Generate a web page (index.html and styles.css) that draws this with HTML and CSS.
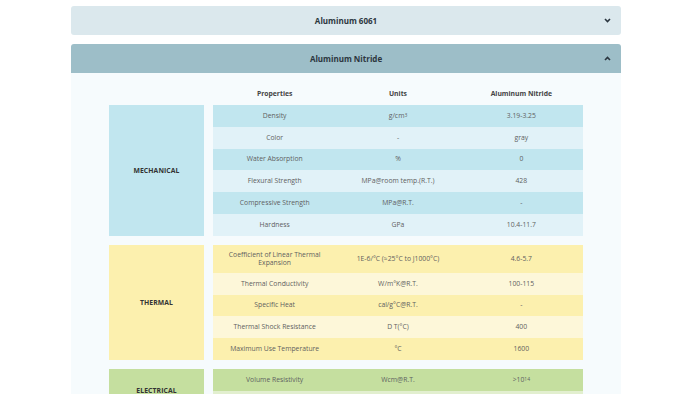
FILE: index.html
```html
<!DOCTYPE html>
<html>
<head>
<meta charset="utf-8">
<link rel="stylesheet" href="styles.css">
</head>
<body>
<div class="wrap">
  <div class="acc">
    <div class="acc-head closed">
      <span class="sp"></span>
      <span class="title">Aluminum 6061</span>
      <span class="chev"><svg width="7" height="5" viewBox="0 0 7 5"><polyline points="1,1 3.5,3.5 6,1" fill="none" stroke="#2b3640" stroke-width="1.6"/></svg></span>
    </div>
  </div>
  <div class="acc">
    <div class="acc-head open">
      <span class="sp"></span>
      <span class="title">Aluminum Nitride</span>
      <span class="chev"><svg width="7" height="5" viewBox="0 0 7 5"><polyline points="1,4 3.5,1.5 6,4" fill="none" stroke="#2b3640" stroke-width="1.6"/></svg></span>
    </div>
    <div class="acc-body">
      <div class="thead">
        <div></div>
        <div class="hrow">
          <div>Properties</div><div>Units</div><div>Aluminum Nitride</div>
        </div>
      </div>

      <div class="group mech">
        <div class="cat">MECHANICAL</div>
        <div class="rows">
          <div class="row"><div>Density</div><div>g/cm<sup>3</sup></div><div>3.19-3.25</div></div>
          <div class="row"><div>Color</div><div>-</div><div>gray</div></div>
          <div class="row"><div>Water Absorption</div><div>%</div><div>0</div></div>
          <div class="row"><div>Flexural Strength</div><div>MPa@room temp.(R.T.)</div><div>428</div></div>
          <div class="row"><div>Compressive Strength</div><div>MPa@R.T.</div><div>-</div></div>
          <div class="row"><div>Hardness</div><div>GPa</div><div>10.4-11.7</div></div>
        </div>
      </div>

      <div class="group therm">
        <div class="cat">THERMAL</div>
        <div class="rows">
          <div class="row two"><div>Coefficient of Linear Thermal Expansion</div><div>1E-6/°C (≈25°C to J1000°C)</div><div>4.6-5.7</div></div>
          <div class="row"><div>Thermal Conductivity</div><div>W/m°K@R.T.</div><div>100-115</div></div>
          <div class="row"><div>Specific Heat</div><div>cal/g°C@R.T.</div><div>-</div></div>
          <div class="row"><div>Thermal Shock Resistance</div><div>D T(°C)</div><div>400</div></div>
          <div class="row"><div>Maximum Use Temperature</div><div>°C</div><div>1600</div></div>
        </div>
      </div>

      <div class="group elec">
        <div class="cat">ELECTRICAL</div>
        <div class="rows">
          <div class="row"><div>Volume Resistivity</div><div>Wcm@R.T.</div><div>&gt;10<sup>14</sup></div></div>
          <div class="row"><div>Dielectric Strength</div><div>kV/mm</div><div>15</div></div>
        </div>
      </div>
    </div>
  </div>
</div>
</body>
</html>
```

FILE: styles.css
```css
html, body {
  margin: 0;
  padding: 0;
  background: #ffffff;
  font-family: "Open Sans", "Noto Sans", sans-serif;
  color: #555;
}
.wrap {
  width: 550px;
  margin-left: 71px;
  padding-top: 6px;
}
.acc {
  margin-bottom: 9px;
}
.acc-head {
  height: 29px;
  display: grid;
  grid-template-columns: 28px 1fr 28px;
  align-items: center;
  border-radius: 3px;
  color: #2c363e;
  font-weight: 700;
  font-size: 8px;
}
.acc-head.closed {
  background: #dbe8ed;
}
.acc-head.open {
  background: #9dbec8;
  border-radius: 3px 3px 0 0;
}
.title {
  text-align: center;
}
.chev {
  display: flex;
  justify-content: center;
  align-items: center;
}
.acc-body {
  background: #f6fbfd;
  padding: 9px 38px 20px 38px;
}
.thead {
  display: grid;
  grid-template-columns: 95px 1fr;
  column-gap: 9px;
  height: 23px;
}
.hrow {
  display: grid;
  grid-template-columns: 1fr 1fr 1fr;
  align-items: center;
  text-align: center;
  font-size: 6.8px;
  font-weight: 700;
  color: #444;
}
.group {
  display: grid;
  grid-template-columns: 95px 1fr;
  column-gap: 9px;
  margin-bottom: 9px;
}
.cat {
  display: flex;
  align-items: center;
  justify-content: center;
  font-size: 6.8px;
  font-weight: 700;
  color: #333;
  letter-spacing: 0.1px;
}
.row {
  display: grid;
  grid-template-columns: 1fr 1fr 1fr;
  min-height: 21.8px;
}
.row.two {
  min-height: 28px;
}
.row > div {
  display: flex;
  align-items: center;
  justify-content: center;
  text-align: center;
  padding: 5px 10px;
  font-size: 6.8px;
  line-height: 8px;
  color: #5f5f5f;
}
sup {
  font-size: 5px;
  line-height: 0;
  position: relative;
  top: -1px;
}
.mech .cat, .mech .row:nth-child(odd) { background: #c1e6ef; }
.mech .row:nth-child(even) { background: #e1f2f8; }
.therm .cat, .therm .row:nth-child(odd) { background: #fcf0ae; }
.therm .row:nth-child(even) { background: #fdf7d9; }
.elec .cat, .elec .row:nth-child(odd) { background: #c5df9f; }
.elec .row:nth-child(even) { background: #e2efcf; }
```
